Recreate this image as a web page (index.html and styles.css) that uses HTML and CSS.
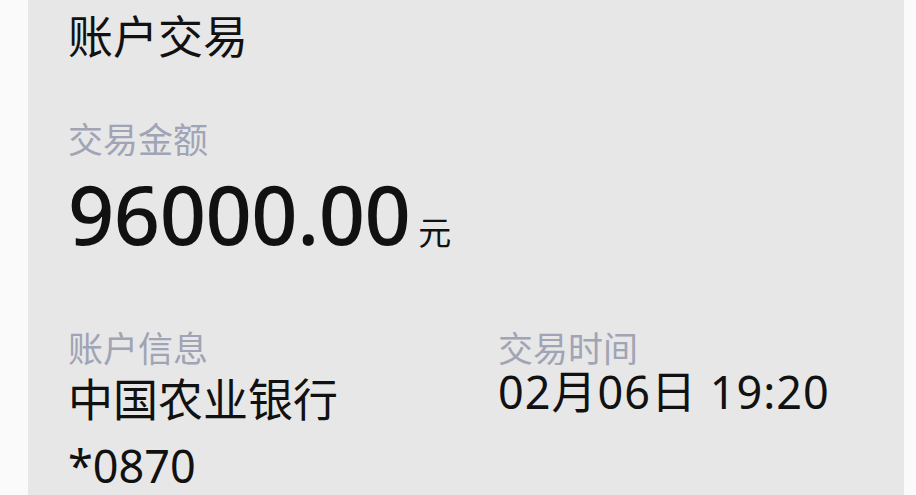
FILE: index.html
```html
<!DOCTYPE html>
<html lang="zh-CN">
<head>
<meta charset="utf-8">
<title>账户交易</title>
<link rel="stylesheet" href="styles.css">
</head>
<body>
<div class="card">
  <h1 class="title">账户交易</h1>
  <section class="amount-block">
    <div class="label">交易金额</div>
    <div class="amount"><span class="num">96000.00</span><span class="unit">元</span></div>
  </section>
  <section class="info-grid">
    <div class="col">
      <div class="label">账户信息</div>
      <div class="value">中国农业银行</div>
      <div class="value">*0870</div>
    </div>
    <div class="col">
      <div class="label">交易时间</div>
      <div class="value date">02月06日 19:20</div>
    </div>
  </section>
</div>
</body>
</html>
```
FILE: styles.css
```css
html, body {
  margin: 0;
  padding: 0;
  background: #fafafa;
  height: 100%;
  overflow: hidden;
}
body {
  font-family: "Noto Sans", "Noto Sans CJK SC", sans-serif;
  color: #111111;
}
.card {
  margin-left: 28px;
  width: 876px;
  height: 495px;
  box-sizing: border-box;
  background: #e7e7e7;
  padding: 13px 0 0 40px;
}
.title {
  margin: 0;
  font-size: 45px;
  font-weight: 400;
  line-height: 48px;
}
.amount-block {
  margin-top: 59px;
}
.label {
  font-size: 35px;
  line-height: 40px;
  color: #a0a4b5;
}
.amount {
  margin-top: 10px;
  display: flex;
  align-items: baseline;
  line-height: 88px;
}
.num {
  font-size: 81px;
  font-weight: 500;
  letter-spacing: -0.5px;
}
.unit {
  font-size: 33px;
  margin-left: 8px;
}
.info-grid {
  margin-top: 52px;
  display: grid;
  grid-template-columns: 430px 1fr;
}
.value {
  font-size: 45px;
  line-height: 66px;
}
.label + .value {
  margin-top: -2px;
}
.label + .date {
  letter-spacing: 1px;
  margin-top: -10px;
}
```
